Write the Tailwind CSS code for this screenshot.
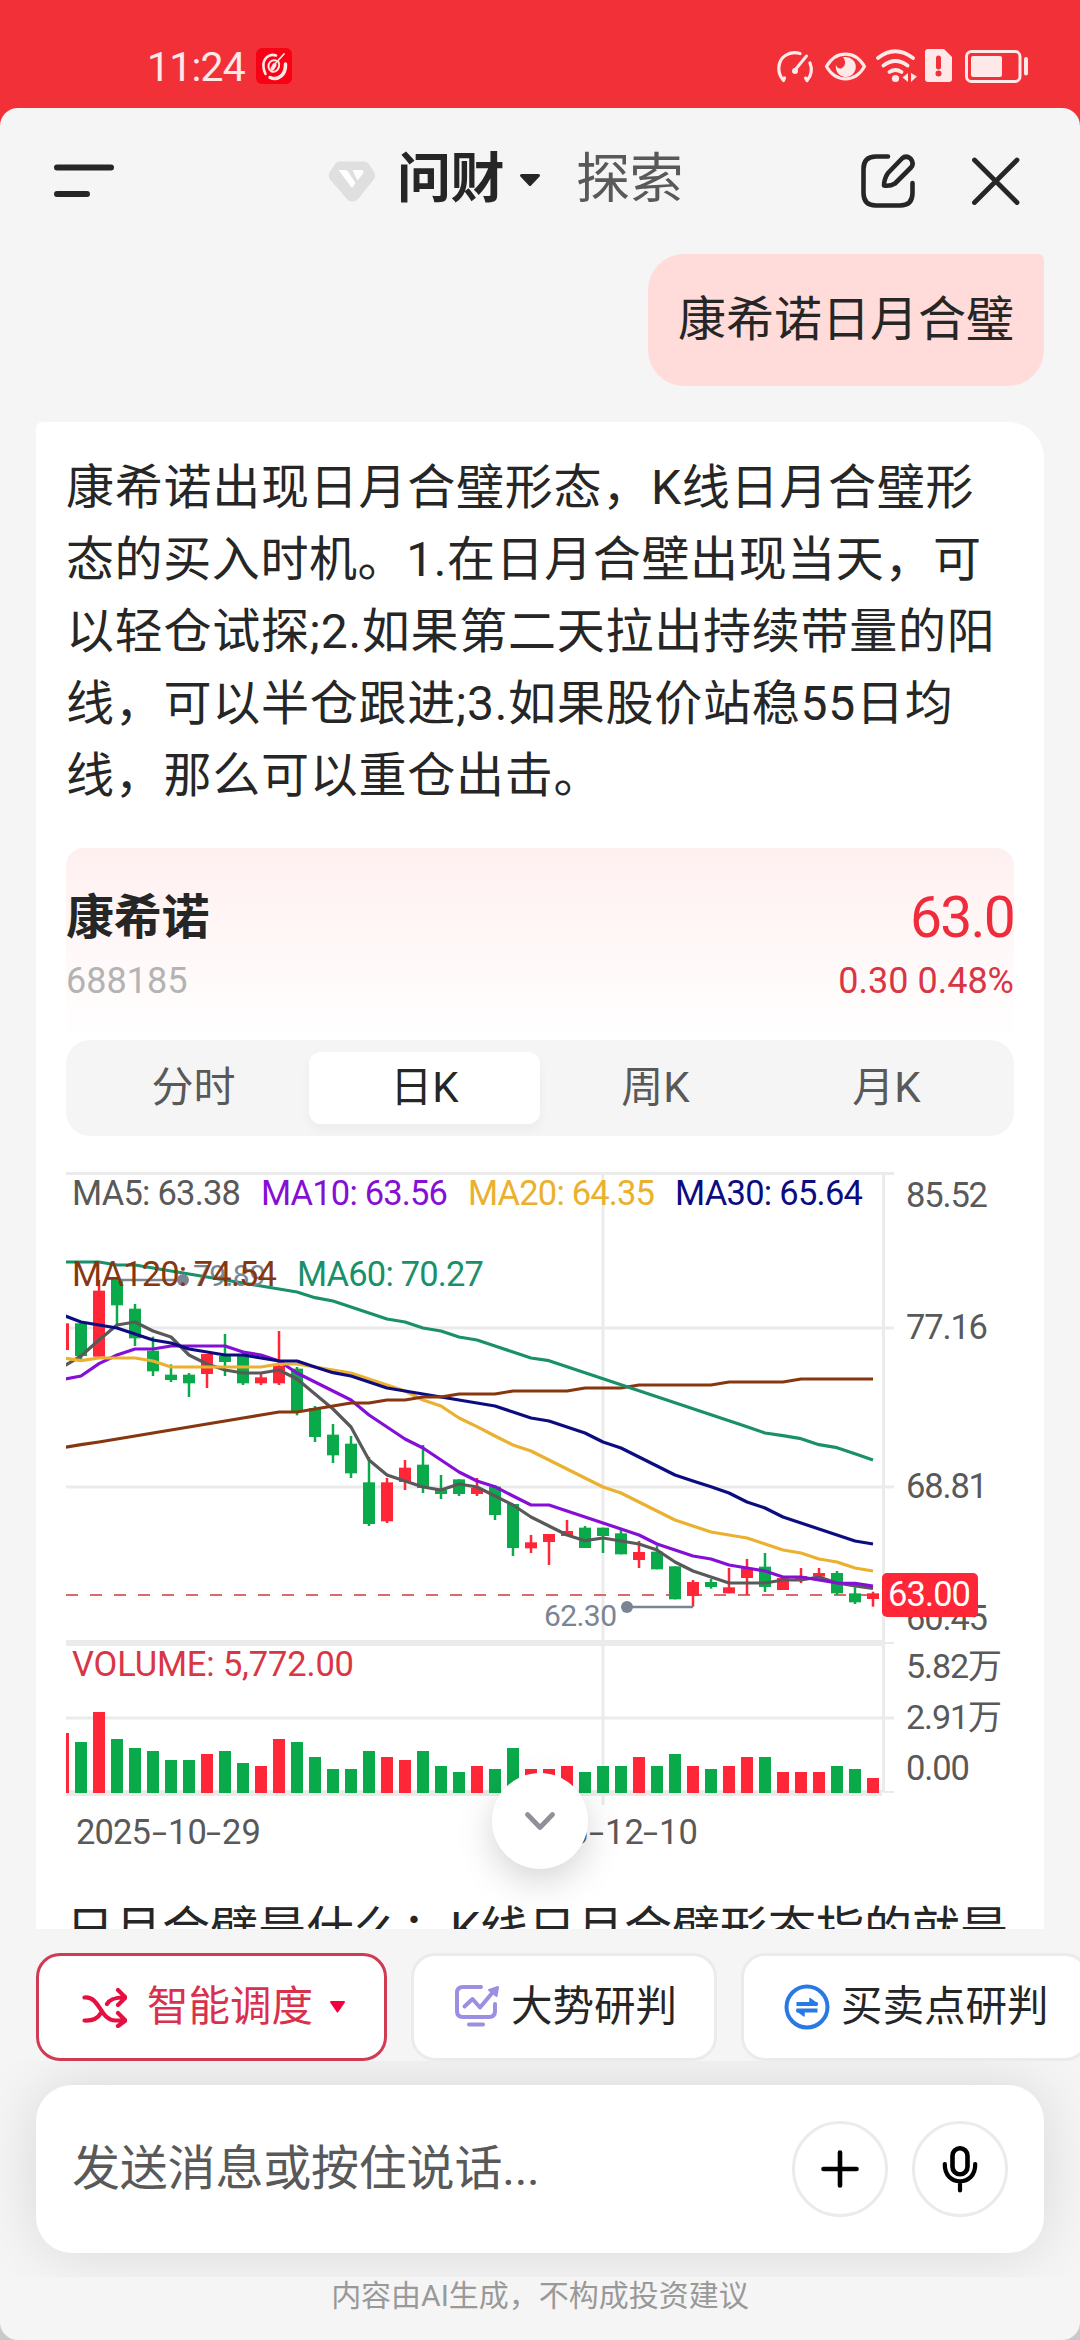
<!DOCTYPE html>
<html lang="zh-CN">
<head>
<meta charset="utf-8">
<title>问财</title>
<script src="https://cdn.jsdelivr.net/npm/@tailwindcss/browser@4"></script>
</head>
<body class="w-[1080px] h-[2340px] overflow-hidden bg-linear-to-b from-[#f23038] from-50% to-[#c9c9c9] to-60% font-[Roboto,'Noto_Sans_CJK_SC',sans-serif] text-[#262626]">
<div class="flex flex-col w-[1080px] h-[2340px]">

  <!-- status bar -->
  <div class="flex h-[108px] shrink-0 items-center pt-6 pl-[147px] pr-[51px]">
    <span class="text-[41px] leading-[48px] tracking-[-0.8px] text-[#ffe8e8] w-[109px] pt-0.5 whitespace-nowrap">11:24</span>
    <svg class="w-9 h-9" viewBox="0 0 36 36"><rect width="36" height="36" rx="6" fill="#fa0014"/>
      <g fill="none" stroke="#ffe8e8" stroke-linecap="round"><path d="M20 7.500C13 5 6.500 11 7.500 19C7.800 22 8.500 24 9.500 26" stroke-width="2.600"/><path d="M14 29.500C22 33 30 27 29.500 16" stroke-width="3.500"/><path d="M28 6L17 18" stroke-width="1.800"/><path d="M20 12.500C15 11.500 12 15 12.500 19C13 23 17 25 20 23C23 21 24 17 22.500 14" stroke-width="2"/><path d="M18.500 17L16.500 20.500" stroke-width="4"/></g></svg>
    <div class="flex-1"></div>
    <svg class="w-[252px] h-9" viewBox="777 48 252 36" fill="none" stroke="#ffe8e8" stroke-width="3.200" stroke-linecap="round" stroke-linejoin="round">
      <path d="M800 53.500C789 50.500 779 57 778.800 68C778.700 73 780.500 77 783.500 80.500L784.500 78"/><path d="M810 63C812.500 69 811.500 76 807 80.500L805.500 78"/><path d="M806.500 56L795 70" stroke-width="3"/><circle cx="795" cy="71" r="3" fill="#ffe8e8" stroke="none"/>
      <path d="M826.500 66.500C836 50 855 50 864.500 66.500C855 83 836 83 826.500 66.500Z"/><path d="M845 57A10 10 0 1 1 836 65Q838 70 842 68Q848 64 843 57Z" fill="#ffe8e8" stroke="none"/>
      <path d="M878 58Q895 44.500 913 58M883.500 65.500Q895.500 56.500 907.500 65.500M889.500 72Q895.500 68 901.500 72" stroke-width="3.800"/><circle cx="895.500" cy="78.500" r="3.600" fill="#ffe8e8" stroke="none"/><path d="M902.500 77.500L908 73V82ZM917 76.500L911 73V82Z" fill="#ffe8e8" stroke="none"/>
      <path d="M928 49H944L952 57V79Q952 82 949 82H928Q925 82 925 79V52Q925 49 928 49Z" fill="#ffe8e8" stroke="none"/><path d="M938.500 58V67" stroke="#f23038" stroke-width="5"/><circle cx="938.500" cy="73.500" r="3" fill="#f23038" stroke="none"/>
      <rect x="966.500" y="51.500" width="53.500" height="30" rx="5" stroke-width="3"/><rect x="971" y="56" width="31" height="21" rx="2" fill="#ffe8e8" stroke="none"/><path d="M1026 59V73.500" stroke-width="4"/>
    </svg>
  </div>

  <!-- sheet -->
  <div class="flex flex-col h-[2232px] bg-[#f5f5f5] rounded-[18px] overflow-hidden">
    <header class="flex h-[146px] shrink-0 items-center px-[54px]">
      <svg class="w-[60px] h-[54px]" viewBox="54 153 60 54" stroke="#262626" stroke-width="6" stroke-linecap="round"><path d="M57 166.500H111M57 193H87"/></svg>
      <svg class="ml-[214px] w-[48px] h-[42px]" viewBox="328 160 48 42"><path d="M339 161.500H364Q367 161.500 369 164L374.500 173Q376 176.500 374 179L359 198Q355.500 202 352 201.500Q348.500 201.500 346 198L330 179.500Q327.800 176.500 329.300 173L335 164Q336.500 161.500 339 161.500Z" fill="#dfdfdf"/><path d="M338.500 170H345Q347 170 348 171.500L355.500 183L352 188Z" fill="#fff"/><path d="M352.500 170H362Q364.500 171 363 173.500L357.500 180.500Z" fill="#fff"/></svg>
      <span class="ml-[21px] w-[110px] pb-0.5 text-[54px] leading-[64px] font-bold whitespace-nowrap tracking-[-0.5px]">问财</span>
      <svg class="ml-[11px] w-6 h-4" viewBox="0 0 24 16"><path d="M3.500 2.500H20.500L12 11.500Z" fill="#262626" stroke="#262626" stroke-width="3" stroke-linejoin="round"/></svg>
      <span class="ml-[34px] w-[110px] pb-0.5 text-[54px] leading-[64px] text-[#595959] whitespace-nowrap tracking-[-0.5px]">探索</span>
      <svg class="ml-[175px] w-[54px] h-[54px]" viewBox="861 153 54 54" fill="none" stroke="#262626" stroke-width="4.600" stroke-linecap="round" stroke-linejoin="round"><path d="M888 155.500H876Q863.500 155.500 863.500 168V192Q863.500 204.500 876 204.500H900Q912.500 204.500 912.500 192V182"/><path d="M902 157.500Q906 154 910.500 157.500Q914.500 162.500 911 166.500L895 182.500Q890 185.500 884 184.500Q884 178 888 172Z"/></svg>
      <svg class="ml-[57px] w-12 h-[54px]" viewBox="972 153.500 48 54" stroke="#262626" stroke-width="4.800" stroke-linecap="round"><path d="M974.500 159.500L1017 202M1017 159.500L974.500 202"/></svg>
    </header>

    <main class="flex flex-col h-[1675px] shrink-0 overflow-hidden px-9">
      <div class="self-end shrink-0 w-[396px] h-[132px] px-[30px] pt-[30px] rounded-[36px] rounded-tr-[6px] bg-[#ffdcda] text-[48px] leading-[72px] whitespace-nowrap">康希诺日月合璧</div>

      <section class="mt-9 shrink-0 h-[1700px] bg-white rounded-tl-[6px] rounded-tr-[36px] px-[30px] pt-[30px]">
        <div class="text-[48px] leading-[72px] tracking-[0.75px] whitespace-nowrap h-[396px]">
          <div>康希诺出现日月合璧形态，K线日月合璧形</div>
          <div class="tracking-[0.6px]">态的买入时机。1.在日月合壁出现当天，可</div>
          <div>以轻仓试探;2.如果第二天拉出持续带量的阳</div>
          <div>线，可以半仓跟进;3.如果股价站稳55日均</div>
          <div>线，那么可以重仓出击。</div>
        </div>

        <div class="flex justify-between h-[192px] rounded-[18px] bg-linear-to-b from-[#fff0f0] to-white pt-[34px]">
          <div>
            <div class="text-[48px] leading-[72px] font-bold tracking-[-0.2px]">康希诺</div>
            <div class="text-[36px] leading-[48px] text-[#b3b3b3] mt-[3px]">688185</div>
          </div>
          <div class="text-right text-[#ee2c3c]">
            <div class="text-[57px] leading-[72px] tracking-[-1.8px]">63.0</div>
            <div class="text-[36px] leading-[48px] mt-[3px] text-[#d93645]">0.30 0.48%</div>
          </div>
        </div>

        <div class="grid grid-cols-4 h-24 rounded-3xl bg-[#f5f5f5] p-3 text-[42px] leading-[71px] text-center text-[#595959]">
          <div>分时</div>
          <div class="bg-white rounded-xl text-[#262626] shadow-[0_6px_12px_rgba(0,0,0,0.04)]">日K</div>
          <div>周K</div>
          <div>月K</div>
        </div>

        <svg id="chart" class="block mt-6 w-[948px] h-[712px]" viewBox="66 1160 948 712"></svg>

        <div class="mt-[22px] text-[48px] leading-[72px] whitespace-nowrap">日月合璧是什么：K线日月合璧形态指的就是</div>
      </section>
    </main>

    <!-- suggestion chips -->
    <div class="flex shrink-0 gap-6 pt-6 pl-9 w-[1080px] h-[132px] overflow-hidden text-[41.5px] leading-[48px] whitespace-nowrap">
      <div class="flex shrink-0 items-center w-[351px] h-[108px] rounded-3xl border-3 border-[#d03a52] bg-white pl-[43px] text-[#d9304c]">
        <svg class="w-[45px] h-[42px]" viewBox="82.500 1986 45 42" fill="none" stroke="#e5103f" stroke-width="4.200" stroke-linecap="round" stroke-linejoin="round"><path d="M85 1997.500C101 1996 100 2020.500 116 2020.500H124M85 2020.500Q97 2021 101 2013.500M107.500 2004Q111 1997.500 124 1997.500M118.500 1990L126 1997.500L118.500 2005M118.500 2013L126 2020.500L118.500 2026"/></svg>
        <span class="ml-5 w-[170px]">智能调度</span>
        <svg class="ml-[12px] w-[17px] h-[14px]" viewBox="0 0 17 14"><path d="M2 2H15L8.500 11.500Z" fill="#f5003f" stroke="#f5003f" stroke-width="2" stroke-linejoin="round"/></svg>
      </div>
      <div class="flex shrink-0 items-center w-[306px] h-[108px] rounded-3xl border-3 border-[#ebebeb] bg-white pl-[40px]">
        <svg class="w-[46px] h-[46px]" viewBox="454 1985 46 46" fill="none" stroke="#9a8fe3" stroke-width="4" stroke-linecap="round" stroke-linejoin="round"><path d="M481 1988H463Q457 1988 457 1994V2012Q457 2018 463 2018H489Q495 2018 495 2012V2005"/><path d="M464.500 2007.500L472.500 2000L480 2008.500L493 1993" /><path d="M489 1991L498 1988L496.500 1997Z" fill="#9a8fe3" stroke-width="2"/><path d="M469 2025.500H483"/></svg>
        <span class="ml-[11px]">大势研判</span>
      </div>
      <div class="flex shrink-0 items-center w-[348px] h-[108px] rounded-3xl border-3 border-[#ebebeb] bg-white pl-[40px]">
        <svg class="w-[46px] h-[46px]" viewBox="0 0 46 46" fill="none" stroke="#2878e6" stroke-width="4"><circle cx="23" cy="23" r="20.500"/><path d="M12.500 20H33.500M12.500 26.500H33.500" stroke-linecap="butt"/><path d="M26 14.500L33.500 20H26ZM20 32L12.500 26.500H20Z" fill="#2878e6" stroke-width="1.500" stroke-linejoin="round"/></svg>
        <span class="ml-[11px]">买卖点研判</span>
      </div>
    </div>

    <!-- message box -->
    <div class="shrink-0 w-[1080px] h-[216px] px-9 pt-6 overflow-hidden">
      <div class="flex items-center h-[168px] rounded-[36px] bg-white shadow-[0_0_60px_rgba(0,0,0,0.12)] pl-9 pr-9">
        <span class="flex-1 text-[48px] leading-[72px] tracking-[-0.2px] text-[#595959] whitespace-nowrap">发送消息或按住说话...</span>
        <div class="flex items-center justify-center w-24 h-24 rounded-full border-3 border-[#ebebeb]">
          <svg class="w-10 h-10" viewBox="0 0 40 40" stroke="#000" stroke-width="4.600" stroke-linecap="round"><path d="M20 3.500V36.500M3.500 20H36.500"/></svg>
        </div>
        <div class="flex items-center justify-center ml-6 w-24 h-24 rounded-full border-3 border-[#ebebeb]">
          <svg class="w-9 h-12" viewBox="0 0 36 48" fill="none" stroke="#000" stroke-width="4.600" stroke-linecap="round"><rect x="10.500" y="3.300" width="15" height="26" rx="7.500"/><path d="M2.800 19C2 42 34 42 33.200 19M18 37V45.500" stroke-width="4.200"/></svg>
        </div>
      </div>
    </div>
    <div class="text-center text-[30px] leading-[38px] text-[#999]">内容由AI生成，不构成投资建议</div>
  </div>
</div>

<script>
const svg = document.getElementById('chart');
const out = [];
const GREEN = '#0aaa4b', RED = '#ff2637', GRID = '#ebebeb';
const cx = i => 63 + 18 * i;
const py = v => 1150 + v / 3;
const rect = (x, y, w, h, f) => out.push(`<rect x="${x}" y="${y}" width="${w}" height="${h}" fill="${f}"/>`);
const text = (s, x, y, w, size, f) => out.push(`<text x="${x}" y="${y}" font-size="${size}" fill="${f}" textLength="${w}" lengthAdjust="spacing">${s}</text>`);

// grid
rect(66, 1172, 828, 3, GRID); rect(66, 1326.5, 828, 3, GRID); rect(66, 1485.5, 828, 3, GRID);
rect(66, 1640, 817, 6, GRID); rect(883, 1642, 11, 2, GRID); rect(66, 1716.5, 828, 3, GRID);
rect(66, 1790, 816, 6, GRID); rect(883, 1791, 11, 2, GRID);
rect(601.5, 1172, 3, 633, GRID); rect(882, 1172, 3, 620, GRID);

// dashed price line
out.push('<path d="M66 1595H882" stroke="#d96a70" stroke-width="2" stroke-dasharray="12 12"/>');

// candles: [colour, body top, body bottom, wick top, wick bottom]
const candles = [
['r',520,600,520,600],['g',520,618,520,627],['r',422,620,390,620],['g',388,466,388,525],['g',476,565,462,588],['g',602,664,560,678],
['g',674,690,643,696],['g',674,700,669,741],['r',612,672,612,714],['g',618,636,552,678],['g',612,700,602,705],['r',682,700,672,705],
['r',647,700,543,705],['g',656,783,651,796],['g',774,861,768,876],['g',854,916,822,939],['g',881,970,858,984],['g',997,1122,921,1128],
['r',997,1114,984,1119],['r',953,996,930,1020],['g',944,1014,885,1029],['g',1020,1032,975,1047],['g',988,1032,988,1038],['r',1014,1032,984,1038],
['g',1010,1095,1006,1110],['g',1062,1194,1062,1218],['r',1177,1195,1155,1209],['r',1152,1176,1152,1245],['r',1143,1158,1110,1158],['g',1133,1194,1128,1194],
['g',1133,1158,1133,1209],['g',1150,1213,1140,1213],['r',1206,1230,1173,1254],['g',1205,1258,1187,1258],['g',1249,1348,1249,1348],['r',1296,1338,1290,1370],
['g',1296,1311,1287,1316],['r',1312,1330,1254,1330],['r',1255,1284,1227,1335],['g',1250,1311,1209,1326],['r',1284,1320,1284,1320],['r',1278,1290,1254,1299],
['r',1269,1280,1254,1280],['g',1269,1330,1263,1335],['g',1330,1357,1312,1362],['r',1330,1347,1325,1370]];
const volumes = [519,546,456,537,564,573,600,600,582,573,609,618,537,546,591,627,627,573,591,600,573,618,636,618,627,564,627,627,618,636,618,618,591,618,582,618,627,618,591,591,636,636,636,618,627,654];
candles.forEach(([c, a, b, h, l], i) => {
  const f = c === 'r' ? RED : GREEN;
  rect(cx(i) - 6, py(a), 12, (b - a) / 3, f);
  rect(cx(i) - 1.25, py(h), 2.5, (l - h) / 3, f);
  const top = 1560 + volumes[i] / 3;
  rect(cx(i) - 6, top, 12, 1793 - top, f);
});

// moving averages
const line = (ys, color) => out.push(`<polyline fill="none" stroke="${color}" stroke-width="3.2" stroke-linejoin="round" points="${ys.map((y, i) => cx(i) + ',' + py(y)).join(' ')}"/>`);
line([650,618,570,525,516,543,561,615,642,660,669,669,660,687,732,777,831,930,975,993,1011,1020,1002,1011,1038,1065,1101,1128,1155,1172,1164,1173,1182,1200,1236,1263,1281,1299,1299,1299,1290,1290,1281,1299,1308,1315], '#595959');
line([688,678,641,615,597,597,588,588,588,588,606,615,633,669,696,723,750,795,831,867,894,930,966,993,1010,1038,1065,1065,1083,1101,1119,1137,1155,1182,1200,1218,1227,1245,1254,1263,1281,1281,1290,1299,1300,1308], '#850fd6');
line([624,632,624,624,624,633,651,651,651,651,651,651,642,642,651,660,669,687,705,723,750,768,804,830,858,885,903,930,957,984,1011,1029,1056,1083,1110,1128,1146,1155,1164,1182,1200,1209,1227,1236,1254,1263], '#ebb02d');
line([495,516,525,534,552,570,579,597,606,615,615,624,633,633,651,668,678,696,714,723,732,741,750,759,768,786,804,813,831,849,876,894,921,948,975,993,1010,1029,1056,1074,1101,1119,1137,1155,1173,1182], '#0c0c80');
line([893,884,876,867,858,849,840,831,822,813,804,795,786,786,777,768,759,759,750,750,741,741,732,732,732,723,723,723,723,714,714,714,705,705,705,705,705,696,696,696,696,687,687,687,687,687], '#87370f');
line([336,336,336,345,345,354,363,372,381,390,399,408,417,426,443,453,471,489,507,516,534,543,561,570,588,606,624,632,650,668,686,704,722,740,758,776,794,812,830,849,857,866,884,893,911,930], '#199069');

// extreme markers
out.push('<path d="M117 1280H183M627 1607H693" stroke="#7b8494" stroke-width="2.500"/><circle cx="183" cy="1280" r="6" fill="#7b8494"/><circle cx="627" cy="1607" r="6" fill="#7b8494"/>');
text('79.89', 193, 1286, 73, 30, '#7b8494');
text('62.30', 544, 1625.5, 73, 30, '#7b8494');

// legends
text('MA5: 63.38', 72, 1205, 169, 34.5, '#595959');
text('MA10: 63.56', 261, 1205, 187, 34.5, '#850fd6');
text('MA20: 64.35', 468, 1205, 187, 34.5, '#ebb02d');
text('MA30: 65.64', 675, 1205, 188, 34.5, '#0c0c80');
text('MA120: 74.54', 72, 1286, 205, 34.5, '#87370f');
text('MA60: 70.27', 297, 1286, 187, 34.5, '#199069');
text('VOLUME: 5,772.00', 72, 1675.5, 282, 34.5, '#d93645');

// axis labels
text('85.52', 906, 1206.5, 82, 34.5, '#595959');
text('77.16', 906, 1338.5, 82, 34.5, '#595959');
text('68.81', 906, 1497.5, 82, 34.5, '#595959');
text('60.45', 906, 1629.5, 82, 34.5, '#595959');
text('5.82万', 906, 1677.5, 96, 34, '#595959');
text('2.91万', 906, 1728.5, 96, 34, '#595959');
text('0.00', 906, 1779.5, 64, 34.5, '#595959');

// dates: digits in groups, with wide hyphens between them
const date = (s, x) => {
  const [y, m, d] = s.split('-');
  const hyphen = dx => `<tspan x="${x + dx}" textLength="15" lengthAdjust="spacingAndGlyphs">-</tspan>`;
  out.push(`<text y="1844" font-size="34.5" fill="#595959"><tspan x="${x}" textLength="75">${y}</tspan>${hyphen(76)}<tspan x="${x + 92}">${m}</tspan>${hyphen(130)}<tspan x="${x + 146}">${d}</tspan></text>`);
};
date('2025-10-29', 76);
date('2025-12-10', 513);

// current price tag
out.push('<rect x="882" y="1573" width="96" height="44" rx="5" fill="#ff2637"/>');
text('63.00', 888, 1605.5, 83, 34.5, '#ffffff');
svg.innerHTML = out.join('');
</script>

<!-- scroll to bottom -->
<div class="absolute left-[492px] top-[1773px] flex items-center justify-center w-24 h-24 rounded-full bg-white shadow-[0_12px_36px_rgba(0,0,0,0.17)]">
  <svg class="w-9 h-6" viewBox="0 0 36 24" fill="none" stroke="#8f9198" stroke-width="4.800" stroke-linecap="round" stroke-linejoin="round"><path d="M5.500 5.500L18 18.500L30.500 5.500"/></svg>
</div>
</body>
</html>
